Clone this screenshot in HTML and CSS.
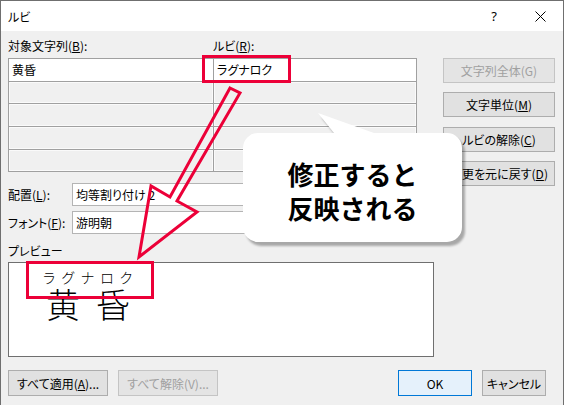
FILE: index.html
```html
<!DOCTYPE html>
<html lang="ja">
<head>
    <meta charset="UTF-8">
    <title>ルビ</title>
    <link rel="stylesheet" href="styles.css">
</head>
<body>
    <div class="window">
        <div class="titlebar">
            <span class="title">ルビ</span>
            <span class="tb-btn help">?</span>
            <span class="tb-btn close">
                <svg width="11" height="11" viewBox="0 0 11 11"><path d="M0.5 0.5 L10.5 10.5 M10.5 0.5 L0.5 10.5" stroke="#000" stroke-width="1" fill="none"/></svg>
            </span>
        </div>

        <div class="content">
            <div class="upper">
                <div class="main">
                    <div class="col-labels">
                        <span class="col-base">対象文字列(<u>B</u>):</span>
                        <span>ルビ(<u>R</u>):</span>
                    </div>
                    <div class="ruby-grid">
                        <div class="cell active">黄昏</div>
                        <div class="cell active">ラグナロク</div>
                        <div class="cell"></div><div class="cell"></div>
                        <div class="cell"></div><div class="cell"></div>
                        <div class="cell"></div><div class="cell"></div>
                        <div class="cell"></div><div class="cell"></div>
                    </div>
                </div>
                <div class="side">
                    <button class="btn side-btn" disabled>文字列全体(G)</button>
                    <button class="btn side-btn">文字単位(<u>M</u>)</button>
                    <button class="btn side-btn">ルビの解除(<u>C</u>)</button>
                    <button class="btn side-btn">変更を元に戻す(<u>D</u>)</button>
                </div>
            </div>

            <div class="field field-first">
                <label>配置(<u>L</u>):</label>
                <div class="combo">均等割り付け 2</div>
            </div>
            <div class="field">
                <label>フォント(<u>F</u>):</label>
                <div class="combo">游明朝</div>
            </div>

            <div class="preview-label">プレビュー</div>
            <div class="preview">
                <div class="ruby-sample">
                    <span class="rt">ラグナロク</span>
                    <span class="rb">黄昏</span>
                </div>
            </div>

            <div class="footer">
                <button class="btn foot-btn">すべて適用(<u>A</u>)...</button>
                <button class="btn foot-btn" disabled>すべて解除(V)...</button>
                <button class="btn ok-btn">OK</button>
                <button class="btn cancel-btn">キャンセル</button>
            </div>
        </div>

        <!-- annotations drawn over the dialog -->
        <svg class="notes" width="564" height="405" viewBox="0 0 564 405">
            <defs>
                <filter id="soft" x="-10%" y="-10%" width="120%" height="130%">
                    <feGaussianBlur stdDeviation="1.2"/>
                </filter>
            </defs>
            <rect x="203.5" y="56.5" width="86" height="25" fill="none" stroke="#ec0038" stroke-width="3"/>
            <rect x="27.5" y="262.5" width="125" height="35" fill="none" stroke="#ec0038" stroke-width="3"/>
            <polygon points="230,88 240,93 177,201 197,212 139,257 151,186 170,197" fill="none" stroke="#ec0038" stroke-width="3" stroke-linejoin="miter"/>
            <path class="callout-shadow" transform="translate(3,4)" filter="url(#soft)"
                  d="M258 133 L334 133 L318 113 L374 133 L447 133 A15 15 0 0 1 462 148 L462 227 A15 15 0 0 1 447 242 L258 242 A15 15 0 0 1 243 227 L243 148 A15 15 0 0 1 258 133 Z"/>
            <path class="callout-body"
                  d="M258 133 L334 133 L318 113 L374 133 L447 133 A15 15 0 0 1 462 148 L462 227 A15 15 0 0 1 447 242 L258 242 A15 15 0 0 1 243 227 L243 148 A15 15 0 0 1 258 133 Z"/>
        </svg>
        <div class="callout-text">修正すると<br>反映される</div>
    </div>
</body>
</html>
```

FILE: styles.css
```css
* {
    box-sizing: border-box;
}

body {
    margin: 0;
    font-family: "Noto Sans CJK JP", "Noto Sans", sans-serif;
    font-size: 12px;
    color: #000;
    background: #fff;
}

.window {
    position: relative;
    width: 564px;
    height: 405px;
    border: 1px solid #6f6f6f;
    border-bottom: none;
    background: #f0f0f0;
    overflow: hidden;
    font-feature-settings: "palt";
}

.titlebar {
    height: 30px;
    background: #fff;
    display: flex;
    align-items: center;
    padding-left: 7px;
}

.title {
    flex: 1;
    font-size: 12px;
}

.tb-btn {
    width: 46px;
    height: 30px;
    display: flex;
    align-items: center;
    justify-content: center;
}

.help {
    font-size: 13px;
    font-family: "Noto Sans", sans-serif;
}

.content {
    padding: 6px 7px 0 7px;
}

.upper {
    display: flex;
    align-items: flex-start;
    height: 135px;
}

.main {
    width: 409px;
}

.col-labels {
    display: flex;
    height: 17px;
    line-height: 17px;
    margin-bottom: 4px;
}

.col-base {
    width: 205px;
}

.ruby-grid {
    display: grid;
    grid-template-columns: 204px 202px;
    grid-template-rows: 22px 21px 22px 22px 21px;
    gap: 1px;
    padding: 1px;
    background: #a0a0a0;
}

.cell {
    background: #f0f0f0;
    border: 1px solid #fafafa;
    line-height: 20px;
    padding-left: 2px;
}

.cell.active {
    background: #fff;
    border-color: #fff;
}

.side {
    margin-left: 26px;
    display: flex;
    flex-direction: column;
    gap: 9.4px;
    padding-top: 21px;
}

.btn {
    font-family: inherit;
    font-size: 12px;
    font-feature-settings: "palt";
    color: #000;
    background: #e1e1e1;
    border: 1px solid #adadad;
    border-radius: 0;
    padding: 0;
    height: 25px;
}

.btn:disabled {
    color: #a0a0a0;
    background: #e4e4e4;
    border-color: #c4c4c4;
}

.side-btn {
    width: 112px;
}

.field {
    display: flex;
    align-items: center;
    height: 23px;
    margin-top: 5px;
}

.field-first {
    margin-top: 11px;
}

.field label {
    width: 64px;
}

.combo {
    width: 250px;
    height: 23px;
    background: #fff;
    border: 1px solid #b4b4b4;
    line-height: 21px;
    padding-left: 3px;
}

.preview-label {
    margin-top: 8px;
    height: 17px;
    line-height: 17px;
    margin-bottom: 3px;
}

.preview {
    width: 426px;
    height: 95px;
    background: #fff;
    border: 1px solid #6f6f6f;
}

.ruby-sample {
    display: flex;
    flex-direction: column;
    margin: 7px 0 0 33px;
    font-feature-settings: normal;
    font-weight: 300;
}

.rt {
    font-size: 14px;
    line-height: 15px;
    letter-spacing: 5.3px;
}

.rb {
    font-size: 34px;
    line-height: 34px;
    margin-top: 2px;
    letter-spacing: 16px;
    margin-left: 4px;
}

.footer {
    display: flex;
    margin-top: 13px;
}

.footer .btn {
    height: 26px;
}

.foot-btn {
    width: 100px;
    margin-right: 10px;
}

.ok-btn {
    width: 74px;
    margin-left: 170px;
    margin-right: 10px;
    background: #e5f1fb;
    border-color: #0078d7;
}

.cancel-btn {
    width: 64px;
}

.notes {
    position: absolute;
    left: -1px;
    top: -1px;
}

.callout-shadow {
    fill: rgba(0, 0, 0, 0.3);
}

.callout-body {
    fill: #fff;
}

.callout-text {
    position: absolute;
    left: 242px;
    top: 132px;
    width: 219px;
    padding-top: 24px;
    text-align: center;
    font-size: 26px;
    line-height: 34px;
    font-weight: 700;
    font-feature-settings: normal;
}
```
